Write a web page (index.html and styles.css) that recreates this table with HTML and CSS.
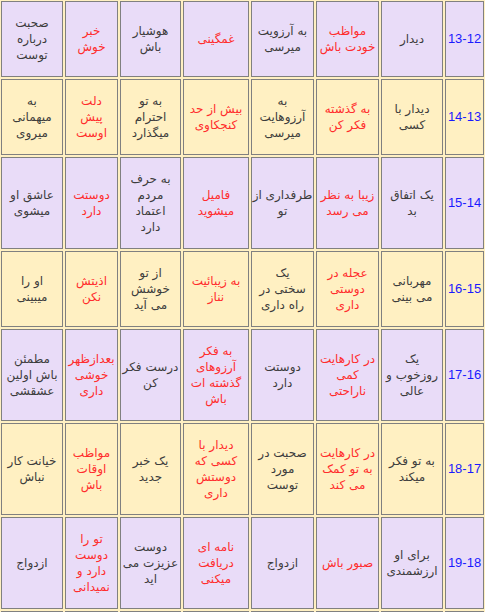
FILE: index.html
```html
<!DOCTYPE html>
<html lang="fa" dir="rtl">
<head>
<meta charset="utf-8">
<title>فال</title>
<link rel="stylesheet" href="styles.css">
</head>
<body>
<div class="fal">
  <div class="c lav num">13-12</div>
  <div class="c lav">دیدار</div>
  <div class="c lav red">مواظب<br>خودت باش</div>
  <div class="c lav">به آرزویت<br>میرسی</div>
  <div class="c lav red">غمگینی</div>
  <div class="c lav">هوشیار<br>باش</div>
  <div class="c lav red">خبر<br>خوش</div>
  <div class="c lav">صحبت<br>درباره<br>توست</div>

  <div class="c crm num">14-13</div>
  <div class="c crm">دیدار با<br>کسی</div>
  <div class="c crm red">به گذشته<br>فکر کن</div>
  <div class="c crm">به<br>آرزوهایت<br>میرسی</div>
  <div class="c crm red">بیش از حد<br>کنجکاوی</div>
  <div class="c crm">به تو<br>احترام<br>میگذارد</div>
  <div class="c crm red">دلت<br>پیش<br>اوست</div>
  <div class="c crm">به<br>میهمانی<br>میروی</div>

  <div class="c lav num">15-14</div>
  <div class="c lav">یک اتفاق<br>بد</div>
  <div class="c lav red">زیبا به نظر<br>می رسد</div>
  <div class="c lav">طرفداری از<br>تو</div>
  <div class="c lav red">فامیل<br>میشوید</div>
  <div class="c lav">به حرف<br>مردم<br>اعتماد<br>دارد</div>
  <div class="c lav red">دوستت<br>دارد</div>
  <div class="c lav">عاشق او<br>میشوی</div>

  <div class="c crm num">16-15</div>
  <div class="c crm">مهربانی<br>می بینی</div>
  <div class="c crm red">عجله در<br>دوستی<br>داری</div>
  <div class="c crm">یک<br>سختی در<br>راه داری</div>
  <div class="c crm red">به زیبائیت<br>نناز</div>
  <div class="c crm">از تو<br>خوشش<br>می آید</div>
  <div class="c crm red">اذیتش<br>نکن</div>
  <div class="c crm">او را<br>میبینی</div>

  <div class="c lav num">17-16</div>
  <div class="c lav">یک<br>روزخوب و<br>عالی</div>
  <div class="c lav red">در کارهایت<br>کمی<br>ناراحتی</div>
  <div class="c lav">دوستت<br>دارد</div>
  <div class="c lav red">به فکر<br>آرزوهای<br>گذشته ات<br>باش</div>
  <div class="c lav">درست فکر<br>کن</div>
  <div class="c lav red">بعدازظهر<br>خوشی<br>داری</div>
  <div class="c lav">مطمئن<br>باش اولین<br>عشقشی</div>

  <div class="c crm num">18-17</div>
  <div class="c crm">به تو فکر<br>میکند</div>
  <div class="c crm red">در کارهایت<br>به تو کمک<br>می کند</div>
  <div class="c crm">صحبت در<br>مورد<br>توست</div>
  <div class="c crm red">دیدار با<br>کسی که<br>دوستش<br>داری</div>
  <div class="c crm">یک خبر<br>جدید</div>
  <div class="c crm red">مواظب<br>اوقات<br>باش</div>
  <div class="c crm">خیانت کار<br>نباش</div>

  <div class="c lav num">19-18</div>
  <div class="c lav">برای او<br>ارزشمندی</div>
  <div class="c lav red">صبور باش</div>
  <div class="c lav">ازدواج</div>
  <div class="c lav red">نامه ای<br>دریافت<br>میکنی</div>
  <div class="c lav">دوست<br>عزیزت می<br>اید</div>
  <div class="c lav red">تو را<br>دوست<br>دارد و<br>نمیدانی</div>
  <div class="c lav">ازدواج</div>

  <div class="c crm empty"></div>
  <div class="c crm empty"></div>
  <div class="c crm empty"></div>
  <div class="c crm empty"></div>
  <div class="c crm empty"></div>
  <div class="c crm empty"></div>
  <div class="c crm empty"></div>
  <div class="c crm empty"></div>
</div>
</body>
</html>
```

FILE: styles.css
```css
html, body {
  margin: 0;
  padding: 0;
  background: #fff0c2;
  overflow: hidden;
}

.fal {
  direction: rtl;
  display: grid;
  grid-template-columns: 39px 62px 63px 63px 66px 61px 53px 62px;
  gap: 2px;
  padding: 1px;
  width: 485px;
  box-sizing: border-box;
  font-family: "DejaVu Sans", sans-serif;
  font-size: 12px;
  line-height: 16px;
  color: #3d3d3d;
}

.c {
  box-sizing: border-box;
  border: 1px solid #808080;
  padding: 13px 1px;
  display: flex;
  align-items: center;
  justify-content: center;
  text-align: center;
  white-space: nowrap;
}

.empty {
  height: 76px;
}

.lav {
  background: #e9dcf8;
}

.crm {
  background: #fff0c2;
}

.red {
  color: #ff2d2d;
}

.num {
  direction: ltr;
  color: #1a1aff;
  font-family: "Liberation Sans", Arial, sans-serif;
  font-size: 13px;
}
```
